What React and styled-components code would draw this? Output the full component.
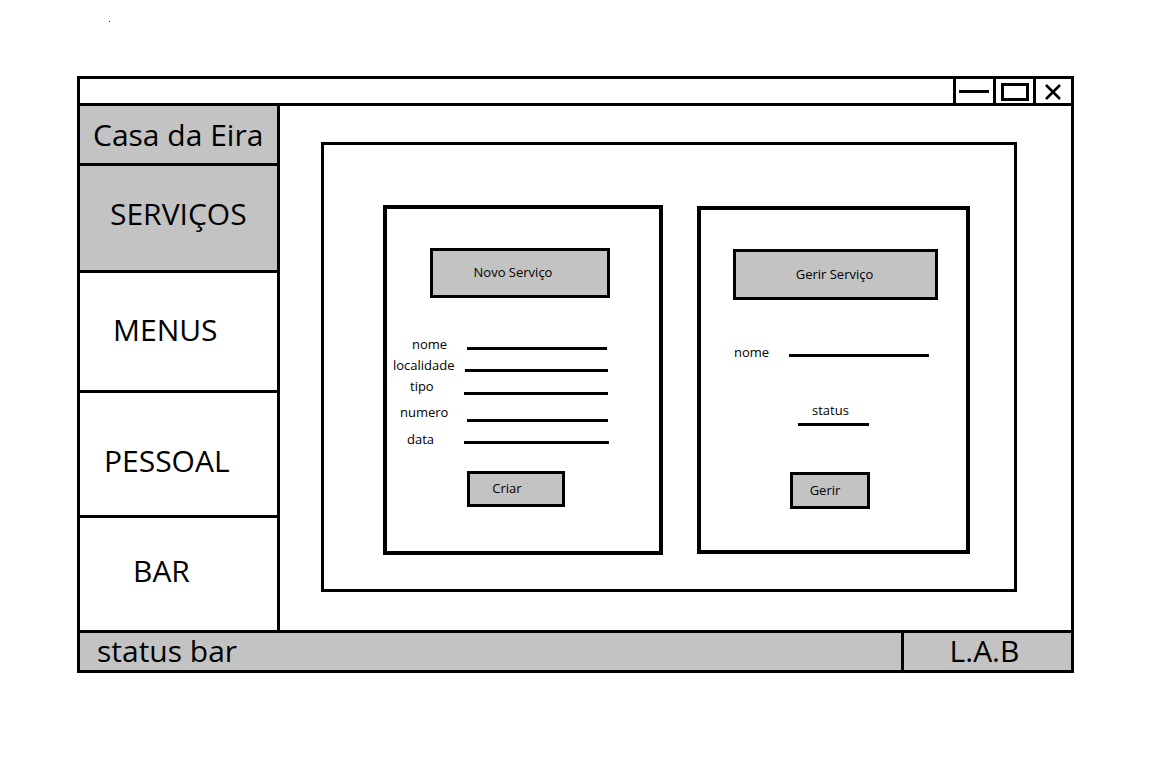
import styled, { createGlobalStyle } from 'styled-components';

const GlobalStyle = createGlobalStyle`
  body {
    margin: 0;
    background: #fff;
    color: #000;
    font-family: "Open Sans", "Noto Sans", sans-serif;
  }
`;

const GRAY = '#c3c3c3';

const Page = styled.div`
  padding: 21px 0 0 77px;
`;

const Speck = styled.div`
  width: 1px;
  height: 1px;
  background: #222;
  margin: 0 0 54px 32px;
`;

const Window = styled.div`
  width: 997px;
  height: 597px;
  box-sizing: border-box;
  border: 3px solid #000;
  display: flex;
  flex-direction: column;
`;

const TitleBar = styled.div`
  height: 27px;
  box-sizing: border-box;
  border-bottom: 3px solid #000;
  display: flex;
  justify-content: flex-end;
`;

const WinButton = styled.div`
  width: ${p => p.$w}px;
  box-sizing: border-box;
  border-left: 3px solid #000;
  display: flex;
  align-items: center;
  justify-content: center;
`;

const MinGlyph = styled.span`
  width: 30px;
  height: 3px;
  background: #000;
  margin-right: 2px;
`;

const MaxGlyph = styled.span`
  width: 28px;
  height: 18px;
  box-sizing: border-box;
  border: 3px solid #000;
  margin-top: 2px;
`;

const Body = styled.div`
  display: flex;
  height: 524px;
`;

const Sidebar = styled.nav`
  width: 200px;
  box-sizing: border-box;
  border-right: 3px solid #000;
  display: flex;
  flex-direction: column;
`;

const NavItem = styled.div`
  height: ${p => p.$h}px;
  box-sizing: border-box;
  border-bottom: ${p => (p.$last ? 0 : 3)}px solid #000;
  background: ${p => (p.$active ? GRAY : '#fff')};
  display: flex;
  align-items: center;
  padding-left: ${p => p.$pl}px;
  padding-top: ${p => Math.max(0, p.$dy * 2)}px;
  padding-bottom: ${p => Math.max(0, -p.$dy * 2)}px;
  font-size: 30px;
  line-height: 1;
  white-space: nowrap;
`;

const Main = styled.main`
  flex: 1;
  padding: 36px 0 0 41px;
`;

const Frame = styled.section`
  width: 696px;
  height: 450px;
  box-sizing: border-box;
  border: 3px solid #000;
  display: flex;
  align-items: flex-start;
  gap: 34px;
  padding: 60px 0 0 59px;
`;

const Card = styled.div`
  width: ${p => p.$w}px;
  height: ${p => p.$h}px;
  margin-top: ${p => p.$mt || 0}px;
  box-sizing: border-box;
  border: 4px solid #000;
  display: flex;
  flex-direction: column;
  align-items: flex-start;
`;

const GrayButton = styled.div`
  width: ${p => p.$w}px;
  height: ${p => p.$h}px;
  margin: ${p => p.$mt}px 0 0 ${p => p.$ml}px;
  padding-right: ${p => p.$nudge || 0}px;
  padding-bottom: 2px;
  box-sizing: border-box;
  border: 3px solid #000;
  background: ${GRAY};
  display: flex;
  align-items: center;
  justify-content: center;
  font-size: 13px;
  white-space: nowrap;
`;

const Fields = styled.div`
  display: flex;
  flex-direction: column;
  margin-top: ${p => p.$mt}px;
`;

const FieldRow = styled.div`
  display: flex;
  align-items: flex-start;
  height: 21px;
  margin-top: ${p => p.$mt || 0}px;
`;

const FieldLabel = styled.div`
  width: ${p => p.$col}px;
  box-sizing: border-box;
  padding-left: ${p => p.$pl}px;
  font-size: 13px;
  line-height: 18px;
  white-space: nowrap;
`;

const FieldLine = styled.div`
  width: ${p => p.$w}px;
  height: 3px;
  background: #000;
  margin: ${p => p.$top}px 0 0 ${p => p.$ml}px;
`;

const StatusField = styled.div`
  display: flex;
  flex-direction: column;
  align-items: flex-start;
  margin-top: ${p => p.$mt}px;
`;

const Caption = styled.div`
  margin-left: ${p => p.$ml}px;
  font-size: 13px;
  line-height: 18px;
`;

const StatusBar = styled.footer`
  height: 40px;
  box-sizing: border-box;
  border-top: 3px solid #000;
  background: ${GRAY};
  display: flex;
`;

const StatusCell = styled.div`
  box-sizing: border-box;
  display: flex;
  align-items: center;
  font-size: 30px;
  line-height: 1;
  padding-bottom: 2px;
  ${p => (p.$main
    ? 'width: 824px; border-right: 3px solid #000; padding-left: 17px;'
    : 'flex: 1; justify-content: center; padding-right: 6px;')}
`;

const navItems = [
  { label: 'Casa da Eira', h: 60, pl: 13, dy: 0, active: true },
  { label: 'SERVIÇOS', h: 107, pl: 30, dy: -4, active: true },
  { label: 'MENUS', h: 120, pl: 33, dy: -2 },
  { label: 'PESSOAL', h: 125, pl: 24, dy: 7 },
  { label: 'BAR', h: 112, pl: 53, dy: -3, last: true },
];

const newFields = [
  { label: 'nome', pl: 25, mt: 0, ml: 3, w: 140, top: 12 },
  { label: 'localidade', pl: 6, mt: 0, ml: 1, w: 143, top: 13 },
  { label: 'tipo', pl: 23, mt: 0, ml: 0, w: 144, top: 15 },
  { label: 'numero', pl: 13, mt: 5, ml: 3, w: 141, top: 16 },
  { label: 'data', pl: 20, mt: 6, ml: 0, w: 145, top: 11 },
];

const CloseGlyph = () => (
  <svg width="18" height="18" viewBox="0 0 18 18" style={{ marginTop: 1, marginRight: 2 }}>
    <path d="M2 2 L16 16 M16 2 L2 16" stroke="#000" strokeWidth="2.6" fill="none" />
  </svg>
);

export default function App() {
  return (
    <>
      <GlobalStyle />
      <Page>
        <Speck />
        <Window>
          <TitleBar>
            <WinButton $w={40}><MinGlyph /></WinButton>
            <WinButton $w={40}><MaxGlyph /></WinButton>
            <WinButton $w={38}><CloseGlyph /></WinButton>
          </TitleBar>
          <Body>
            <Sidebar>
              {navItems.map(item => (
                <NavItem
                  key={item.label}
                  $h={item.h}
                  $pl={item.pl}
                  $dy={item.dy}
                  $active={item.active}
                  $last={item.last}
                >
                  {item.label}
                </NavItem>
              ))}
            </Sidebar>
            <Main>
              <Frame>
                <Card $w={280} $h={350}>
                  <GrayButton $w={180} $h={50} $mt={39} $ml={43} $nudge={14}>
                    Novo Serviço
                  </GrayButton>
                  <Fields $mt={37}>
                    {newFields.map(f => (
                      <FieldRow key={f.label} $mt={f.mt}>
                        <FieldLabel $col={77} $pl={f.pl}>{f.label}</FieldLabel>
                        <FieldLine $w={f.w} $ml={f.ml} $top={f.top} />
                      </FieldRow>
                    ))}
                  </Fields>
                  <GrayButton $w={98} $h={36} $mt={20} $ml={80} $nudge={18}>
                    Criar
                  </GrayButton>
                </Card>
                <Card $w={273} $h={348} $mt={1}>
                  <GrayButton $w={205} $h={51} $mt={39} $ml={32} $nudge={2}>
                    Gerir Serviço
                  </GrayButton>
                  <Fields $mt={43}>
                    <FieldRow>
                      <FieldLabel $col={88} $pl={33}>nome</FieldLabel>
                      <FieldLine $w={140} $ml={0} $top={11} />
                    </FieldRow>
                  </Fields>
                  <StatusField $mt={37}>
                    <Caption $ml={111}>status</Caption>
                    <FieldLine $w={71} $ml={97} $top={4} />
                  </StatusField>
                  <GrayButton $w={80} $h={37} $mt={46} $ml={89} $nudge={10}>
                    Gerir
                  </GrayButton>
                </Card>
              </Frame>
            </Main>
          </Body>
          <StatusBar>
            <StatusCell $main>status bar</StatusCell>
            <StatusCell>L.A.B</StatusCell>
          </StatusBar>
        </Window>
      </Page>
    </>
  );
}
